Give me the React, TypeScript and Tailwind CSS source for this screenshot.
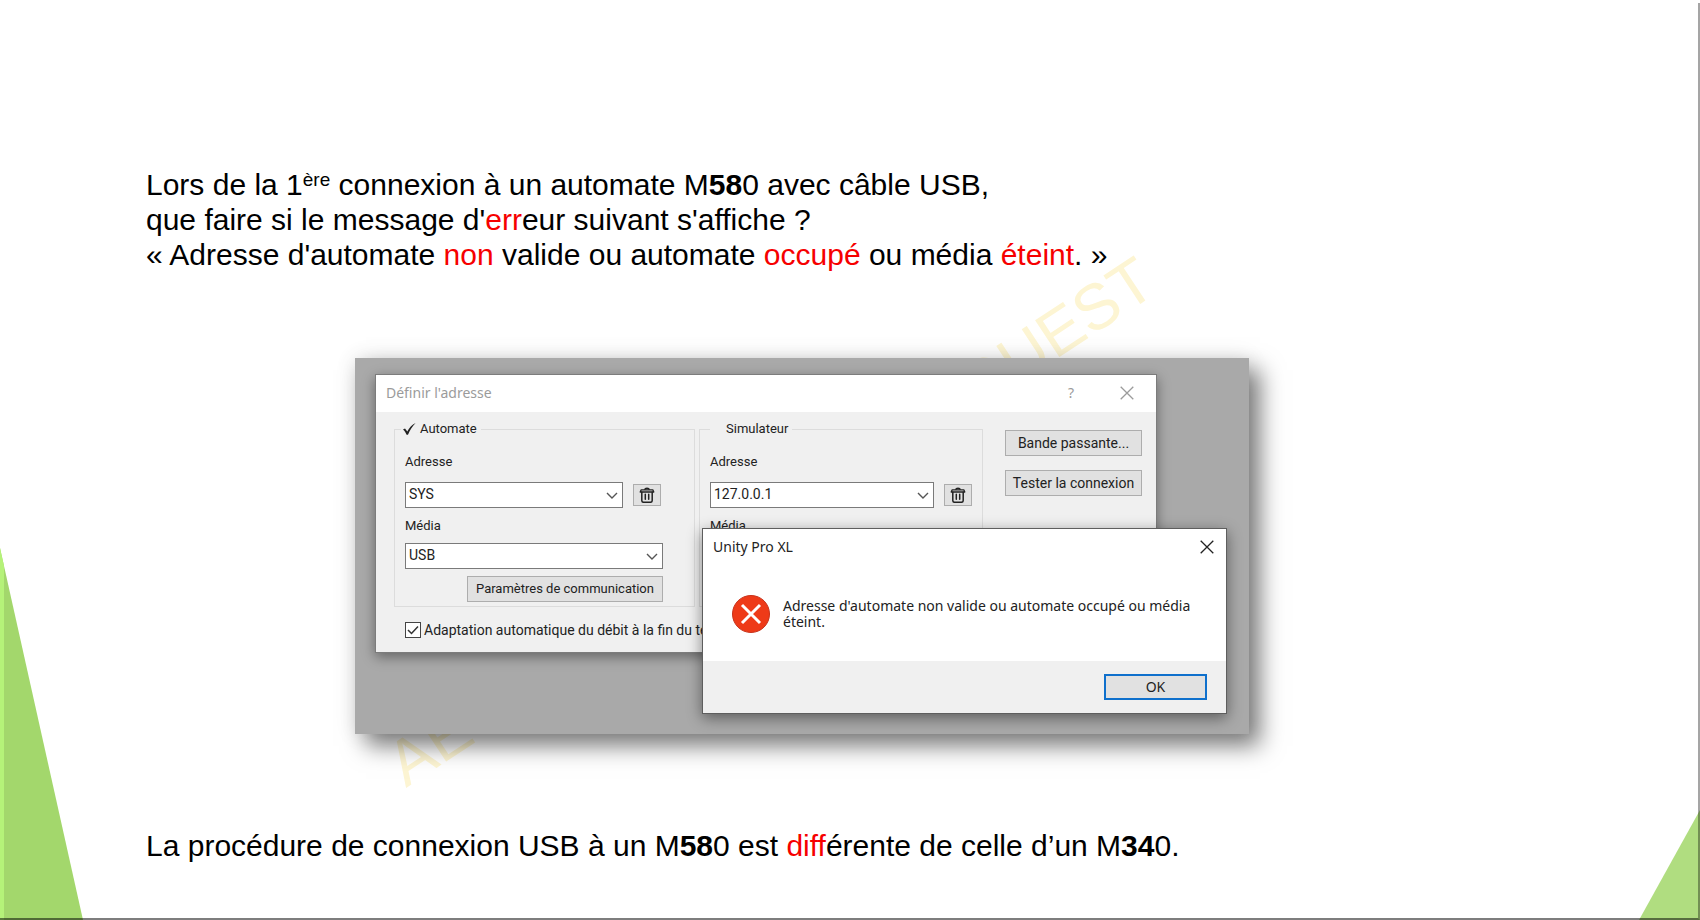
import type { ReactNode } from 'react'

function TrashIcon() {
  return (
    <svg viewBox="0 0 16 16" className="size-4" fill="none" stroke="#222" strokeLinecap="round" strokeLinejoin="round">
      <path d="M6 2.2C6 .9 10 .9 10 2.2" strokeWidth="1.6" />
      <path d="M2.2 2.8h11.6l1 2.2H1.2z" strokeWidth="1.3" />
      <path d="M2.8 5.2v8.3c0 1.2.7 1.8 1.8 1.8h6.8c1.1 0 1.8-.6 1.8-1.8V5.2" strokeWidth="1.5" />
      <path d="M6.3 7.3v5M9.7 7.3v5" strokeWidth="1.5" />
    </svg>
  )
}

function CloseIcon() {
  return (
    <svg viewBox="0 0 14 14" className="size-[14px]" fill="none" stroke="currentColor" strokeWidth="1.3">
      <path d="M.7.7l12.6 12.6M13.3.7L.7 13.3" />
    </svg>
  )
}

function Combo({ id, value, className }: { id: string; value: string; className: string }) {
  return (
    <div className={`relative ${className}`}>
      <select
        id={id}
        defaultValue={value}
        className="block h-[26px] w-full appearance-none border border-[#7a7a7a] bg-white pr-6 pb-0.5 pl-[3px] text-[14px] leading-4 text-[#222]"
      >
        <option>{value}</option>
      </select>
      <svg viewBox="0 0 12 7" className="pointer-events-none absolute top-[10px] right-[5px] h-[7px] w-3" fill="none" stroke="#555" strokeWidth="1.4">
        <path d="M1 1l5 5 5-5" />
      </svg>
    </div>
  )
}

function DialogButton({ children, className }: { children: ReactNode; className: string }) {
  return (
    <button className={`h-[26px] border border-[#adadad] bg-[#e1e1e1] leading-4 whitespace-nowrap text-[#222] ${className}`}>
      {children}
    </button>
  )
}

function TrashButton() {
  return (
    <button aria-label="Supprimer" className="flex h-[22px] w-7 items-center justify-center border border-[#adadad] bg-[#e1e1e1]">
      <TrashIcon />
    </button>
  )
}

function AddressDialog() {
  return (
    <section className="w-[782px] border border-[#7c7c7c] bg-[#f0f0f0] font-[Roboto,sans-serif] text-[14px] leading-4 text-[#222] shadow-[0_4px_12px_rgba(0,0,0,0.4)]">
      <header className="flex h-[37px] items-center bg-white pr-[22px] pb-0.5 pl-[10px] font-['Noto_Sans',sans-serif] text-[#9b9b9b]">
        <h2 className="flex-1">Définir l'adresse</h2>
        <button className="mr-[46px]" aria-label="Aide">?</button>
        <button aria-label="Fermer">
          <CloseIcon />
        </button>
      </header>

      <div className="flex pt-[9px] pr-[14px] pl-[18px]">
        <fieldset className="w-[301px] border border-[#dcdcdc] px-[10px] pb-1 text-[13px]">
          <legend className="-ml-1 flex items-center gap-1 pr-1 pl-0.5">
            <svg viewBox="0 0 13 12" className="h-3 w-[13px]" fill="#222">
              <path d="M0 6.6l2-1.2 2.3 3.2C6 5 9 1.800 12.600 0 9.500 3 7 6.800 5 11.800H3.600C2.700 9.700 1.500 7.900 0 6.600z" />
            </svg>
            Automate
          </legend>
          <div className="flex w-[258px] flex-col">
            <label htmlFor="plc-address" className="mt-[17px]">Adresse</label>
            <div className="mt-3 flex items-center gap-[10px]">
              <Combo id="plc-address" value="SYS" className="w-[218px]" />
              <TrashButton />
            </div>
            <label htmlFor="plc-media" className="mt-[10px]">Média</label>
            <Combo id="plc-media" value="USB" className="mt-[9px] w-full" />
            <DialogButton className="mt-[7px] w-[196px] self-end">Paramètres de communication</DialogButton>
          </div>
        </fieldset>

        <fieldset className="ml-1 w-[284px] border border-[#dcdcdc] px-[10px] pb-1 text-[13px]">
          <legend className="pr-1 pl-4">Simulateur</legend>
          <div className="flex flex-col">
            <label htmlFor="sim-address" className="mt-[17px]">Adresse</label>
            <div className="mt-3 flex items-center gap-[10px]">
              <Combo id="sim-address" value="127.0.0.1" className="w-[224px]" />
              <TrashButton />
            </div>
            <p className="mt-[10px]">Média</p>
          </div>
        </fieldset>

        <div className="ml-[22px] flex flex-1 flex-col gap-[14px] pt-[9px]">
          <DialogButton className="w-full">Bande passante...</DialogButton>
          <DialogButton className="w-full">Tester la connexion</DialogButton>
        </div>
      </div>

      <label className="mt-[15px] ml-[29px] flex items-center gap-[3px] pb-[14px]">
        <span className="relative size-4">
          <input type="checkbox" defaultChecked className="block size-4 appearance-none border border-[#444] bg-white" />
          <svg viewBox="0 0 16 16" className="pointer-events-none absolute inset-0 size-4" fill="none" stroke="#333" strokeWidth="1.5">
            <path d="M3 8l3.500 3.500L13 4.500" />
          </svg>
        </span>
        Adaptation automatique du débit à la fin du télé
      </label>
    </section>
  )
}

function ErrorDialog() {
  return (
    <section
      role="alertdialog"
      className="absolute right-[22px] bottom-5 w-[525px] border border-[#5e5e5e] bg-white font-['Noto_Sans',sans-serif] text-[14px] leading-4 text-[#222] shadow-[0_4px_14px_rgba(0,0,0,0.45)]"
    >
      <header className="flex h-9 items-center justify-between pr-3 pl-[10px]">
        <h2>Unity Pro XL</h2>
        <button aria-label="Fermer">
          <CloseIcon />
        </button>
      </header>
      <div className="flex h-24 items-start gap-3 pt-[29px] pr-7 pl-7">
        <svg viewBox="0 0 40 40" className="size-10 shrink-0">
          <circle cx="20" cy="20" r="18.500" fill="#ee3a18" stroke="#c8321a" />
          <path d="M11 11l18 18M29 11L11 29" stroke="#fff" strokeWidth="3" />
        </svg>
        <p className="pt-1">Adresse d'automate non valide ou automate occupé ou média éteint.</p>
      </div>
      <footer className="flex h-[52px] items-center justify-end bg-[#f0f0f0] pr-[19px]">
        <button className="h-[26px] w-[103px] border-2 border-[#0f70cc] bg-[#e1e1e1]">OK</button>
      </footer>
    </section>
  )
}

function Watermark() {
  return (
    <svg
      viewBox="0 0 894 376"
      className="absolute top-0 left-0 h-[376px] w-[894px] overflow-visible font-['Liberation_Sans',sans-serif]"
      fill="#fdf5d3"
      fontSize="64"
    >
      <g transform="translate(51 430) rotate(-33.400)">
        <text>AE</text>
        <text x="902" textAnchor="end">OUEST</text>
      </g>
    </svg>
  )
}

const Red = ({ children }: { children: ReactNode }) => <span className="text-[#f60000]">{children}</span>

export default function App() {
  return (
    <main className="relative min-h-screen overflow-hidden bg-white pt-[167px] pl-[146px] font-['Liberation_Sans',Arial,sans-serif] text-[30px] leading-[35px] text-black">
      {/* Slide decoration */}
      <div className="absolute bottom-0 left-0 h-[372px] w-[83px] bg-[#a3d76c] [clip-path:polygon(0_0,100%_100%,0_100%)]">
        <div className="h-full w-1 bg-[#b5f279]" />
      </div>
      <div className="absolute right-0 bottom-0 h-[110px] w-[61px] bg-[#b0dd80] [clip-path:polygon(100%_0,100%_100%,0_100%)]" />
      <div className="absolute inset-x-0 top-[3px] bottom-0 border-r-2 border-b-2 border-r-black/35 border-b-black/50" />

      <p className="relative z-10">
        Lors de la 1<sup className="top-[-9px] text-[19px] leading-none">ère</sup> connexion à un automate M<b>58</b>0 avec câble USB,
        <br />
        que faire si le message d'<Red>err</Red>eur suivant s'affiche ?
        <br />
        « Adresse d'automate <Red>non</Red> valide ou automate <Red>occupé</Red> ou média <Red>éteint</Red>. »
      </p>

      <figure className="relative mt-[86px] ml-[209px] w-[894px]">
        <Watermark />
        <div className="relative h-[376px] bg-[#a9a9a9] pt-4 pl-5 shadow-[11px_12px_22px_rgba(0,0,0,0.5),0_0_20px_rgba(0,0,0,0.1)]">
          <AddressDialog />
          <ErrorDialog />
        </div>
      </figure>

      <p className="relative mt-[94px]">
        La procédure de connexion USB à un M<b>58</b>0 est <Red>diff</Red>érente de celle d’un M<b>34</b>0.
      </p>
    </main>
  )
}
